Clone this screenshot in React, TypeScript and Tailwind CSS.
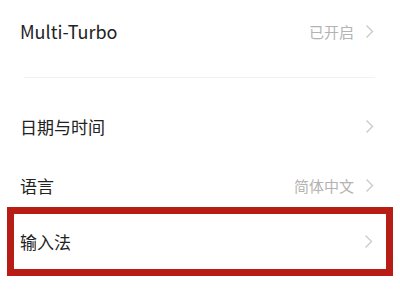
import React from "react";

const font = {
  fontFamily: '"Noto Sans CJK SC", "Noto Sans", sans-serif',
};

function Chevron() {
  return (
    <svg width="9" height="15" viewBox="0 0 9 15" fill="none" className="shrink-0">
      <polyline points="1.5,1.5 7.5,7.5 1.5,13.5" stroke="#c9c9c9" strokeWidth="1.3" />
    </svg>
  );
}

function Row({ label, value, className }: { label: string; value?: string; className: string }) {
  return (
    <div className={`flex items-center justify-between ${className}`}>
      <span className="text-[17px] leading-none text-[#222]">{label}</span>
      <div className="flex items-center gap-[11px]">
        {value ? <span className="text-[15px] leading-none text-[#b3b3b3]">{value}</span> : null}
        <Chevron />
      </div>
    </div>
  );
}

export default function App() {
  return (
    <div className="h-[300px] w-[400px] overflow-hidden bg-white" style={font}>
      <Row label="Multi-Turbo" value="已开启" className="h-[62px] pl-[20px] pr-[26px] [&>span]:text-[18px]" />
      <div className="h-[35px] pt-[15px]">
        <div className="ml-[24px] mr-[25px] h-px bg-[#f1f1f1]" />
      </div>
      <Row label="日期与时间" className="h-[58px] pl-[20px] pr-[26px]" />
      <Row label="语言" value="简体中文" className="h-[52px] pl-[20px] pr-[26px] pt-[8px]" />
      <div className="mx-[7px] border-[7px] border-[#b71c15]">
        <Row label="输入法" className="h-[55px] pl-[6px] pr-[13px]" />
      </div>
    </div>
  );
}
